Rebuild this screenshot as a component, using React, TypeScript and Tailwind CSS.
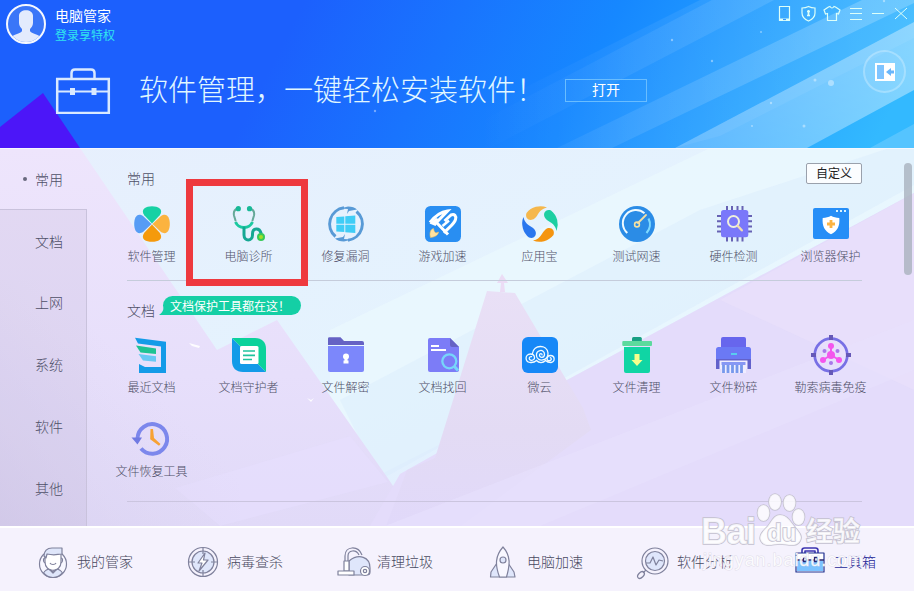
import type { ReactNode } from "react";

interface Tool {
  label: string;
  icon: ReactNode;
  highlighted?: boolean;
}

const categories = ["常用", "文档", "上网", "系统", "软件", "其他"];

const commonTools: Tool[] = [
  {
    label: "软件管理",
    icon: (
      <>
        <path d="M18 17.500 10.300 9.300C6 3 12 .2 18 .2s12 2.800 7.700 9.100Z" fill="#17d1a4" />
        <path d="M18.500 18 26.700 10.300C33 6 35.800 12 35.800 18s-2.800 12-9.100 7.700Z" fill="#fbb33f" />
        <path d="M18 18.500 25.700 26.700C30 33 24 35.800 18 35.800s-12-2.800-7.700-9.100Z" fill="#f59a0c" />
        <path d="M17.500 18 9.300 25.700C3 30 .2 24 .2 18S3 6 9.300 10.300Z" fill="#569cf5" />
      </>
    )
  },
  {
    label: "电脑诊所",
    highlighted: true,
    icon: (
      <g fill="none" strokeLinecap="round">
        <path d="M6.500 2.500C2.500 4 2.500 7 3 9.500l1.500 5M19 2.500C23.500 4 23.500 7 23 9.500l-1.500 5" stroke="#66a898" strokeWidth="2" />
        <path d="M4.500 16c2 4.500 5.500 5.500 8.500 5.500s6.500-1 8.500-5.500" stroke="#1bc9a0" strokeWidth="3" strokeLinecap="butt" />
        <path d="M13 22v7c0 6.500 8.500 6.500 8.500 0v-1c0-6.500 7-6.500 8.500-1" stroke="#15a793" strokeWidth="3" />
        <circle cx="7.300" cy="2.700" r="2.600" fill="#17b997" />
        <circle cx="18.500" cy="2.700" r="2.600" fill="#17b997" />
        <circle cx="30" cy="31" r="3" fill="#a2df28" stroke="#36c957" strokeWidth="2" />
      </g>
    )
  },
  {
    label: "修复漏洞",
    icon: (
      <>
        <path d="M7.500 30.500A16.300 16.300 0 0 1 16 1.800M28.500 5.500A16.300 16.300 0 0 1 20 34.200" fill="none" stroke="#589ad6" strokeWidth="3" />
        <path d="M12 2.500 20 .5c4 0 7 1.200 9 3l-8 1.500-2 3 1-5ZM24 33.500 16 35.500c-4 0-7-1.200-9-3l8-1.500 2-3-1 5Z" fill="#589ad6" />
        <path d="m8.300 10.900 8-.5v7.300h-8Zm9-.6 10-.8v8.200h-10ZM8.300 18.700h8v7.300l-8-.6Zm9 0h10v8.400l-10-.9Z" fill="#3fcdf6" />
      </>
    )
  },
  {
    label: "游戏加速",
    icon: (
      <>
        <rect width="36" height="36" rx="5.500" fill="#298ef2" />
        <g fill="none" stroke="#fff" strokeWidth="3">
          <path d="M5 16.500C10 10 15.500 6 22.500 5L11.500 16.500l11.500 12" />
          <path d="M19.500 15 26 9c3.500-1.500 5.500 1 4.500 4.500-1.500 5-7 8-11.500 13.500" />
          <path d="m17.500 20 6.500-5.500" strokeWidth="2.500" />
        </g>
        <path d="M4.500 17.500 11 12l4 1.500-4.500 6.500Z" fill="#fff" />
        <path d="M8.500 22.500c-3.500 1-4 5-3 9 3.500-.5 7.500-1.500 8-5.500l-2.500 1c-1-.5-2-1.500-2.500-4.500Z" fill="#ffe2a0" stroke="#f6c35a" strokeWidth=".6" />
      </>
    )
  },
  {
    label: "应用宝",
    icon: (
      <>
        <path d="M25 1.400A18 18 0 0 0 4.500 7C2.500 12.500 8 16 12.500 12.500S16 3.500 25 1.400Z" fill="#f5b74c" />
        <path d="M25 1.400A18 18 0 0 0 4.500 7C2.500 12.500 8 16 12.500 12.500S16 3.500 25 1.400Z" fill="#1dcfa2" transform="rotate(90 18 18)" />
        <path d="M25 1.400A18 18 0 0 0 4.500 7C2.500 12.500 8 16 12.500 12.500S16 3.500 25 1.400Z" fill="#f5950f" transform="rotate(180 18 18)" />
        <path d="M25 1.400A18 18 0 0 0 4.500 7C2.500 12.500 8 16 12.500 12.500S16 3.500 25 1.400Z" fill="#2a77ee" transform="rotate(270 18 18)" />
      </>
    )
  },
  {
    label: "测试网速",
    icon: (
      <>
        <circle cx="18" cy="18" r="18" fill="#2b8ce6" />
        <path d="M8.300 27A12.800 12.800 0 0 1 25.500 7.300" fill="none" stroke="#effaff" strokeWidth="2" />
        <path d="M29.500 12.500A12.800 12.800 0 0 1 27.500 27" fill="none" stroke="#7dd9ff" strokeWidth="2.200" />
        <path d="m19 17 8-8" stroke="#f3dfa4" strokeWidth="1.800" strokeLinecap="round" />
        <circle cx="18" cy="18.500" r="2.400" fill="none" stroke="#f5e0a0" strokeWidth="1.600" />
      </>
    )
  },
  {
    label: "硬件检测",
    icon: (
      <>
        <path d="M11 0v5M16 0v5M21.500 0v5M26.500 0v5M11 31v4.500M16 31v4.500M21.500 31v4.500M26.500 31v4.500M1 10h5M1 15.200h5M1 20.400h5M1 25.600h5M31 10h5M31 15.200h5M31 20.400h5M31 25.600h5" stroke="#6762b4" strokeWidth="2" />
        <rect x="5" y="4" width="27.300" height="27.300" rx="2.500" fill="#7a78fa" />
        <circle cx="17.500" cy="15.500" r="5.500" fill="none" stroke="#eef0dd" strokeWidth="2" />
        <path d="m21.800 20 4 4.300" stroke="#f1deb0" strokeWidth="2.400" strokeLinecap="round" />
      </>
    )
  },
  {
    label: "浏览器保护",
    icon: (
      <>
        <rect y="2" width="36" height="31" rx="2" fill="#268ef7" />
        <path d="M23 4h2v2h-2Zm4 0h2v2h-2Zm4 0h2v2h-2Z" fill="#d9f3ff" />
        <path d="M18 9.800c2.500 1.500 5 2 8.300 2.200.7 8-1.800 13-8.300 16.300C11.500 25 9 20 9.700 12c3.300-.2 5.800-.7 8.300-2.200Z" fill="#fff" />
        <path d="M18 14v8M14 18h8" stroke="#fbb445" strokeWidth="2.800" />
      </>
    )
  }
];

const documentTools: Tool[] = [
  {
    label: "最近文档",
    icon: (
      <>
        <path d="M1 .8 32 4.700V36H5v-9l6 3h16V9.500L4 6.500Z" fill="#149be8" />
        <path d="m2 8.500 20 3V17L6.500 15.500Z" fill="#1fc392" />
        <path d="m4.500 17 17.500 2.300v5.500L9 23.500Z" fill="#68c9f4" />
      </>
    )
  },
  {
    label: "文档守护者",
    icon: (
      <>
        <path d="M1 1v23c0 7 4 11 11 11h23L1 1Z" fill="#139be8" />
        <path d="M1 1h23c7 0 11 4 11 11v23Z" fill="#0bd29b" />
        <rect x="9" y="9" width="18.500" height="18" rx="1.500" fill="#fff" />
        <path d="M12 14h12M12 18.300h12M12 22.500h9" stroke="#20c49e" strokeWidth="1.700" />
      </>
    )
  },
  {
    label: "文件解密",
    icon: (
      <>
        <path d="M0 1.500Q0 .2 1.500.2h11L16 4h18q2 0 2 2v2H0Z" fill="#6562c4" />
        <path d="M0 9h36v24q0 2-2 2H2q-2 0-2-2Z" fill="#7c87fb" />
        <circle cx="18" cy="19.500" r="3" fill="#fff" />
        <path d="M16.500 20h3v3.500h1v3h-5v-3h1Z" fill="#fff" />
      </>
    )
  },
  {
    label: "文档找回",
    icon: (
      <>
        <path d="M5 1h20l9 9v23q0 2-2 2H5q-2 0-2-2V3q0-2 2-2Z" fill="#7c7cf7" />
        <path d="M25 1v7q0 2 2 2h7Z" fill="#6562c4" />
        <path d="M6 9h8M6 13h15" stroke="#fff" strokeWidth="1.800" />
        <circle cx="24.300" cy="24.300" r="7" fill="#7c7cf7" stroke="#77d5fa" strokeWidth="2.300" />
        <path d="m29 29 4 4.500" stroke="#77d5fa" strokeWidth="3" />
      </>
    )
  },
  {
    label: "微云",
    icon: (
      <>
        <rect width="36" height="36" rx="6" fill="#1688f7" />
        <g fill="none" stroke="#f2fbff" strokeWidth="1.300" strokeLinecap="round">
          <path d="M9 25.500c-6.500 0-6.500-8.500-.5-8.500 5 0 5.300 6.500 1 6.300-3.500-.3-2.500-4.300 0-3.600" />
          <path d="M10.500 16.500c1-9 14.500-9.500 15.500-.5.500 8-10.500 9.500-11.500 3-.8-6.500 7.800-7.500 8-1.800 0 4-5.200 4-5 .8.100-2 2.700-1.800 2.500-.2" />
          <path d="M9 25.500q3.500 0 5.500-2c2.500 2.700 6.500 2.700 9 0q2 2 5.500 2c4.500-1 4-7-.5-7-4 0-4.500 5-1.500 5.200 2.500.2 3-2.500 1.300-3" />
        </g>
      </>
    )
  },
  {
    label: "文件清理",
    icon: (
      <>
        <path d="M13 4V1.500Q13 0 14.500 0h6.800q1.500 0 1.500 1.500V4Z" fill="#189f83" />
        <rect x="3.300" y="4" width="29.700" height="5" rx="1" fill="#5cda9d" />
        <path d="M5 10h26v24q0 2-2 2H7q-2 0-2-2Z" fill="#10d5a4" />
        <path d="M15.500 17h5v6h3L18 29l-5.500-6h3Z" fill="#f5ff8c" />
      </>
    )
  },
  {
    label: "文件粉碎",
    icon: (
      <>
        <path d="M5 10V2q0-2 2-2h21q2 0 2 2v8Z" fill="#6766ed" />
        <path d="M0 12.500Q0 10 2.500 10h30q2.500 0 2.500 2.500V32H0Z" fill="#6b79f5" />
        <path d="M0 22h35v10H0Z" fill="#6261cb" />
        <path d="M3.500 23.500h28V32H30v4H5.500v-4h-2Z" fill="#f0edff" />
        <path d="M7.500 25v11M12 25v11M16.500 25v11M21 25v11M25.500 25v11" stroke="#7798ec" strokeWidth="2.800" />
        <path d="M5.500 25h24v3h-24Z" fill="#8797f4" />
        <path d="M15 17h6" stroke="#55e3ee" strokeWidth="1.600" />
      </>
    )
  },
  {
    label: "勒索病毒免疫",
    icon: (
      <>
        <circle cx="18" cy="18" r="16.300" fill="none" stroke="#7870e5" strokeWidth="2.700" />
        <path d="M16-2h4v5h-4ZM16 33h4v5h-4ZM-2 16h5v4h-5ZM33 16h5v4h-5Z" fill="#6558b7" />
        <path d="M18 9v9l-8 5M18 18l8 5" fill="none" stroke="#f456ed" strokeWidth="2" />
        <g fill="#f456ed">
          <circle cx="18" cy="18" r="4" />
          <circle cx="18" cy="9" r="3" />
          <circle cx="10" cy="23" r="3" />
          <circle cx="26" cy="23" r="3" />
        </g>
        <g fill="#a878e9">
          <circle cx="11.500" cy="14" r="2" />
          <circle cx="24.500" cy="14" r="2" />
          <circle cx="18" cy="26" r="2" />
        </g>
      </>
    )
  },
  {
    label: "文件恢复工具",
    icon: (
      <>
        <path d="M3.500 17.500A14.800 14.800 0 1 1 7 27.500" fill="none" stroke="#7c87ec" strokeWidth="4" />
        <path d="M-2.500 16.500h10.500L3.500 23.500Z" fill="#707ae2" />
        <path d="M16.500 8h2.500l1 9 6.500 6-1.500 1.800-8.800-6.600Z" fill="#f7a234" />
      </>
    )
  }
];

const navItems: { label: string; icon: ReactNode; active?: boolean }[] = [
  {
    label: "我的管家",
    icon: (
      <>
        <circle cx="15" cy="17" r="13.500" fill="#f8f7ff" />
        <path d="M5.500 26c2-3.500 5-4 7-4l2 3 3-3c4 0 5.500 1.500 7 4-5 6-14 6-19 0Z" fill="#dfe6fa" />
        <path d="M7 8v7c0 11 16 11 16 0V7" fill="#fff" />
        <path d="M7 11C5 11 5 15 7 16M23 11c2 0 2 4 0 5M12 16c1 2 5 2 6 0M12 22v1l3 3 3-3v-1" />
        <path d="M6 9c0-5 3-8 8-8h10v6c-5 0-6 2-15 0l-1 4Z" fill="#dfe6fa" />
      </>
    )
  },
  {
    label: "病毒查杀",
    icon: (
      <>
        <circle cx="15" cy="15" r="14.500" />
        <circle cx="15" cy="15" r="11" fill="#dfe6fb" />
        <path d="M15 1v6M15 23v6M1 15h6M23 15h6" />
        <path d="m17 6-7 10h4l-3 8 9-11h-4.500Z" fill="#fff" />
      </>
    )
  },
  {
    label: "清理垃圾",
    icon: (
      <>
        <path d="M11 14c10-8 21-4 21 7v4q0 3-3 3H11Z" fill="#dfe6fb" />
        <path d="M7 15V9C7-1 20-2 24 8M10 15V9c0-6 8-7 11-1" />
        <path d="M6 14h5v10H6Z" fill="#fff" />
        <path d="M0 24h16v4H0Z" fill="#fff" />
        <circle cx="27" cy="24" r="4.500" fill="#fff" />
        <circle cx="27" cy="24" r="1.700" />
      </>
    )
  },
  {
    label: "电脑加速",
    icon: (
      <>
        <path d="m9 16-6 9-.5 5h24.500l-1-5-6-9" fill="#dfe6fb" />
        <path d="M15 0c8 9 7 18 3.500 30h-7C7 18 7 9 15 0Z" fill="#f8f7ff" />
        <circle cx="15" cy="13" r="3" fill="#dfe6fb" />
      </>
    )
  },
  {
    label: "软件分析",
    icon: (
      <>
        <circle cx="17" cy="14" r="13" />
        <circle cx="17" cy="14" r="9.500" fill="#dfe6fb" />
        <path d="M8 16h4l3-6 3 8 3-5 4 1M8 23l-3 3" />
        <ellipse cx="3" cy="28" rx="4" ry="2.500" transform="rotate(-45 3 28)" />
      </>
    )
  },
  {
    label: "工具箱",
    active: true,
    icon: (
      <>
        <path d="M7 6V3.500Q7 1 9.500 1h11Q23 1 23 3.500V6M10 6V4h10v2" stroke="#3d35b0" strokeWidth="1.600" />
        <path d="M1 6h28v19H1Z" fill="#fff" stroke="#20308f" />
        <path d="M2 13.500h26V24H2Z" fill="#7bc2ff" stroke="none" />
        <path d="M1 13h7M12 13h7M23 13h6M8.500 10.500h3v4h-3ZM19.500 10.500h3v4h-3Z" stroke="#28266e" strokeWidth="1.300" />
      </>
    )
  }
];

const HeaderBackdrop = () => (
  <svg className="absolute inset-0" width="914" height="148" viewBox="0 0 914 148" aria-hidden="true">
    <defs>
      <linearGradient id="sky" gradientUnits="userSpaceOnUse" x1="330" y1="-50" x2="840" y2="210">
        <stop offset="0" stopColor="#1c60fd" />
        <stop offset=".5" stopColor="#1688ff" />
        <stop offset="1" stopColor="#33b9ff" />
      </linearGradient>
      <linearGradient id="beam" x1="0" y1="1" x2="1" y2="0">
        <stop offset="0" stopColor="#fff" stopOpacity=".27" />
        <stop offset="1" stopColor="#fff" stopOpacity=".42" />
      </linearGradient>
      <linearGradient id="softBeam" gradientUnits="userSpaceOnUse" x1="480" y1="0" x2="860" y2="0">
        <stop offset="0" stopColor="#fff" stopOpacity="0" />
        <stop offset=".4" stopColor="#fff" stopOpacity=".09" />
        <stop offset="1" stopColor="#fff" stopOpacity=".2" />
      </linearGradient>
    </defs>
    <path d="M0 0h914v148H0Z" fill="url(#sky)" />
    <path d="M0 127 43 93l37 55H0Z" fill="#4c16f8" />
    <path d="M700 0h214v22L675 148H404Z" fill="url(#softBeam)" opacity=".6" />
    <path d="M430 148 712 0h62L490 148Z" fill="url(#softBeam)" opacity=".7" />
    <path d="M557 148 862 0h52v3L612 148Z" fill="url(#softBeam)" />
    <path d="M675 148 914 22v68L807 148Z" fill="url(#beam)" />
    <path d="M675 148 914 22v16L720 136Z" fill="#fff" opacity=".06" />
    <path d="m870 148 44-24v24Z" fill="#fff" opacity=".17" />
    <g fill="#fff" opacity=".4">
      <circle cx="831" cy="83" r="3" />
      <circle cx="815" cy="80" r="1.500" />
      <circle cx="804" cy="126" r="1.500" />
      <circle cx="771" cy="103" r="1.200" />
      <circle cx="752" cy="126" r="1" />
      <circle cx="712" cy="61" r="1.200" />
      <circle cx="672" cy="40" r="1.200" />
      <circle cx="761" cy="32" r="1" />
      <circle cx="375" cy="111" r="1.200" />
      <circle cx="884" cy="1" r="1.200" />
    </g>
  </svg>
);

const ContentBackdrop = () => (
  <svg className="absolute inset-0" width="914" height="378" viewBox="0 148 914 378" aria-hidden="true">
    <defs>
      <linearGradient id="haze" x1="0" y1="0" x2="1" y2="1">
        <stop offset="0" stopColor="#e7effd" />
        <stop offset=".5" stopColor="#e4f3fe" />
        <stop offset="1" stopColor="#dfeafe" />
      </linearGradient>
      <linearGradient id="hill" x1="0" y1="0" x2="0" y2="1">
        <stop offset="0" stopColor="#eee5fc" />
        <stop offset=".6" stopColor="#e7dffb" />
        <stop offset="1" stopColor="#e1daf8" />
      </linearGradient>
      <linearGradient id="peak" x1="0" y1="0" x2="0" y2="1">
        <stop offset="0" stopColor="#e9e0f6" />
        <stop offset=".6" stopColor="#e3dbf4" />
        <stop offset="1" stopColor="#e1d9fa" />
      </linearGradient>
      <linearGradient id="corner" x1="0" y1="1" x2="1" y2="0">
        <stop offset="0" stopColor="#d5cdec" stopOpacity=".6" />
        <stop offset=".6" stopColor="#dcd5f0" stopOpacity="0" />
      </linearGradient>
    </defs>
    <path d="M0 148h914v378H0Z" fill="url(#haze)" />
    <path d="M330 330 710 148h204v45L567 380 330 500Z" fill="#ebf9fe" opacity=".65" />
    <path d="M340 400 700 210l214-70v45L380 480Z" fill="#d9ecfd" opacity=".45" />
    <path d="M0 148h80l137 202 60-30 110 157 33 49H0Z" fill="url(#hill)" />
    <path d="M914 193 567 380 400 474l-30 52h544Z" fill="#e4dcfb" />
    <path d="M914 193 720 300l194 90Z" fill="#ebe1fb" opacity=".5" />
    <path d="m487 291 28 2 68 115 8 22-130 96h-75l21-56 28-12Z" fill="url(#peak)" />
    <path d="m502 274 6 9h-4l1 9h-5l1-9h-4Z" fill="#ebdcf5" />
    <path d="m385 526 529-206v50L540 526Z" fill="#e7e1fe" opacity=".6" />
    <path d="m175 488 175-52 38 46-168 44Z" fill="#e8e0ff" opacity=".5" />
    <path d="M0 280h240v246H0Z" fill="url(#corner)" />
    <path d="m189 343 11 3-1 2-7-2ZM307 398l4 2 3-2-3 4Z" fill="#fff" opacity=".9" />
    <path d="M0 148h914v1H0Z" fill="#f5f8ff" />
  </svg>
);

const ToolTile = ({ label, icon, highlighted = false }: Tool) => (
  <li className="relative flex h-[84px] flex-col items-center">
    <svg width="36" height="36" viewBox="0 0 36 36" className="overflow-visible" aria-hidden="true">
      {icon}
    </svg>
    <span className="mt-[5px] text-[12px] leading-[18px] whitespace-nowrap text-[#4f5068]">{label}</span>
    {highlighted && <div className="absolute -top-[27px] -left-[14px] h-[107px] w-[122px] border-[7px] border-[#ee393e]" />}
  </li>
);

const WindowControls = () => (
  <svg width="136" height="22" viewBox="776 3 136 22" fill="none" stroke="#ddfff8" strokeWidth="1.200" aria-hidden="true">
    <path d="M779.500 6.500h10v14h-10Z" />
    <path d="M779 18.500h11v2.500h-11Z" fill="#ddfff8" stroke="none" />
    <path d="M783 19.500h3" stroke="#3596ff" />
    <path d="M808.500 6.500c2 1 4 1.500 6.500 1.500v5c0 4-3 6.500-6.500 8-3.500-1.500-6.500-4-6.500-8V8c2.500 0 4.500-.5 6.500-1.500Z" />
    <path d="M808.500 10v6M807 11.500h3M807 15.500h3" strokeWidth="1.700" />
    <path d="m828.500 7-4.500 3 1.500 4 2-.5v7h9v-7l2 .5 1.500-4-4.500-3-1.500-.5q-2 3-4 0Z" />
    <path d="M850 8.500h12M850 13.500h12M850 19.500h12M872 13.500h12M895 8l12 11M907 8l-12 11" strokeWidth="1" />
  </svg>
);

const Header = () => (
  <header className="relative h-[148px] overflow-hidden text-white">
    <HeaderBackdrop />
    <div className="relative flex h-[46px] items-start justify-between pl-[6px]">
      <div className="flex gap-[9px] pt-1">
        <svg width="40" height="40" viewBox="0 0 40 40" aria-hidden="true">
          <clipPath id="face">
            <circle cx="20" cy="20" r="18" />
          </clipPath>
          <circle cx="20" cy="20" r="19" fill="#3a76f8" stroke="#f5f8ff" strokeWidth="2" />
          <path d="M13 13C12 4 28 4 27 13v6c0 3-2 5-3 6v2c1 3 10 3 12 8v5H4v-5c2-5 11-5 12-8v-2c-1-1-3-3-3-6Z" fill="#e3ebfd" clipPath="url(#face)" />
        </svg>
        <div>
          <p className="text-[14px] leading-[22px] font-normal">电脑管家</p>
          <p className="text-[12px] leading-[18px] font-normal text-[#31e4ef]">登录享特权</p>
        </div>
      </div>
      <div className="pt-[3px] pr-[2px]">
        <WindowControls />
      </div>
    </div>
    <div className="relative flex h-[88px] items-center pl-[55px]">
      <svg width="56" height="47" viewBox="0 0 56 47" fill="none" stroke="#d9e9ff" strokeWidth="2.500" aria-hidden="true">
        <path d="M16.500 12V6q0-3.500 3.500-3.500h16q3.500 0 3.500 3.500v6M2.200 12h51.600v34H2.200Z" />
        <path d="M2 24.500h13M20 24.500h17M41 24.500h13" strokeWidth="2" />
        <path d="M15 21h5v7h-5ZM36.500 21h5v7h-5Z" fill="#d9e9ff" stroke="none" />
      </svg>
      <h1 className="mb-[5px] ml-[28px] w-[426px] text-[29px] leading-[42px] font-light whitespace-nowrap text-[#e1f7ff]">软件管理，一键轻松安装软件！</h1>
      <button className="h-[23px] w-[82px] border border-[#69bdff] pb-[2px] text-[14px] leading-[19px] font-normal">打开</button>
      <button aria-label="收起" className="mt-[4px] mr-[8px] ml-auto flex size-[43px] items-center justify-center self-start rounded-full border-2 border-white/25 bg-white/5">
        <svg width="20" height="18" viewBox="0 0 20 18" aria-hidden="true">
          <path d="M0 0h20v18H0Z" fill="#fff" />
          <path d="M2 2h7v14H2Z" fill="#7fc4ff" />
          <path d="m11 9 5-4v2.500h3v3h-3V13Z" fill="#69b6fa" />
        </svg>
      </button>
    </div>
  </header>
);

const Watermark = () => (
  <svg className="pointer-events-none absolute top-[488px] left-[696px]" width="190" height="90" viewBox="696 488 190 90" aria-hidden="true">
    <g fill="#fff" fillOpacity=".8" stroke="#c3c0cf" strokeWidth="1.600" paintOrder="stroke">
      <text x="701" y="544" fontFamily="Liberation Sans, sans-serif" fontSize="36" fontWeight="700" textLength="55">Bai</text>
      <ellipse cx="763.500" cy="513" rx="6" ry="8" />
      <ellipse cx="775" cy="502" rx="6" ry="8" />
      <ellipse cx="789.500" cy="503" rx="6" ry="8" />
      <ellipse cx="798.500" cy="517" rx="6" ry="8" />
      <path d="M780 515c7 0 10 6 14 11 5 6 9 10 6 15-4 7-13 3-20 3s-15 4-19-3c-3-5 2-10 7-15 4-5 6-11 12-11Z" />
      <text x="767" y="541" fontFamily="Liberation Sans, sans-serif" fontSize="24" fontWeight="700">du</text>
      <text x="806" y="541" fontFamily="Noto Sans CJK SC, sans-serif" fontSize="27" fontWeight="700">经验</text>
    </g>
    <text
      x="703"
      y="566"
      fill="#fff"
      fillOpacity=".85"
      stroke="#d8d5e4"
      strokeOpacity=".7"
      strokeWidth="1"
      paintOrder="stroke"
      fontFamily="Liberation Sans, sans-serif"
      fontSize="18"
      textLength="160"
    >
      jingyan.baidu.com
    </text>
  </svg>
);

export default function App() {
  return (
    <div className="relative h-[591px] w-[914px] overflow-hidden font-['Noto_Sans_CJK_SC',sans-serif] font-light">
      <Header />
      <div className="relative flex h-[378px]">
        <ContentBackdrop />
        <aside className="relative flex w-[87px] flex-col">
          {categories.map((category, index) => (
            <button
              key={category}
              className={[
                "relative w-full pl-[35px] text-left text-[14px] text-[#4f5068]",
                index === 0 ? "h-[61px] pt-px" : "h-[62px] border-r border-[#c9c2dc] bg-[#a28fbd]/13 pt-px",
                index === 1 ? "border-t" : ""
              ].join(" ")}
            >
              {index === 0 && <span className="absolute top-[29px] left-[23px] size-[4px] rounded-full bg-[#68697e]" />}
              {category}
            </button>
          ))}
          <div className="grow border-r border-[#c9c2dc] bg-[#a28fbd]/13" />
        </aside>
        <main className="relative w-[827px]">
          <section className="mr-[52px] ml-[40px] h-[133px] border-b border-[#c5ccdb] pt-[15px]">
            <div className="flex items-start justify-between">
              <h2 className="pt-[4px] text-[14px] leading-[22px] text-[#4f5068]">常用</h2>
              <button className="h-[21px] w-[56px] rounded-[2px] border border-[#9aa1ac] bg-[#fbfdff] pb-px text-[12px] leading-[18px] font-normal text-[#222]">自定义</button>
            </div>
            <ul className="mt-[17px] -ml-[24px] grid w-[776px] grid-cols-8">
              {commonTools.map((tool) => (
                <ToolTile key={tool.label} {...tool} />
              ))}
            </ul>
          </section>
          <section className="mr-[52px] ml-[40px] h-[221px] border-b border-[#cbc5df] pt-[15px]">
            <div className="flex h-[41px] items-start">
              <h2 className="pt-[3px] text-[14px] leading-[22px] text-[#4f5068]">文档</h2>
              <div className="relative ml-[8px] h-[19px] w-[138px] rounded-full bg-[#14cfa5] pl-[7px] text-[12px] leading-[19px] font-normal whitespace-nowrap text-white">
                <svg className="absolute bottom-0 -left-[4px]" width="16" height="10" viewBox="0 0 16 10" aria-hidden="true">
                  <path d="M0 10Q5 7 5 0l11 10Z" fill="#14cfa5" />
                </svg>
                <span className="relative">文档保护工具都在这！</span>
              </div>
            </div>
            <ul className="-ml-[24px] grid w-[776px] grid-cols-8">
              {documentTools.map((tool) => (
                <ToolTile key={tool.label} {...tool} />
              ))}
            </ul>
          </section>
          <div className="absolute top-[15px] right-[2px] h-[112px] w-[8px] rounded-full bg-[#a9b2be]/80" />
        </main>
      </div>
      <nav className="flex h-[65px] items-center border-t-2 border-white bg-[#f5f2fd] pt-[4px] pl-[38px]">
        {navItems.map(({ label, icon, active }) => (
          <a
            key={label}
            className={active ? "ml-[7px] flex items-center gap-[7px] text-[14px] text-[#241f96]" : "flex w-[150px] items-center gap-[7px] text-[14px] text-[#484960]"}
          >
            <svg className="overflow-visible" width="32" height="30" viewBox="0 0 32 30" fill="none" stroke="#7f819c" strokeWidth="1.200" strokeLinejoin="round" aria-hidden="true">
              {icon}
            </svg>
            {label}
          </a>
        ))}
      </nav>
      <Watermark />
    </div>
  );
}
